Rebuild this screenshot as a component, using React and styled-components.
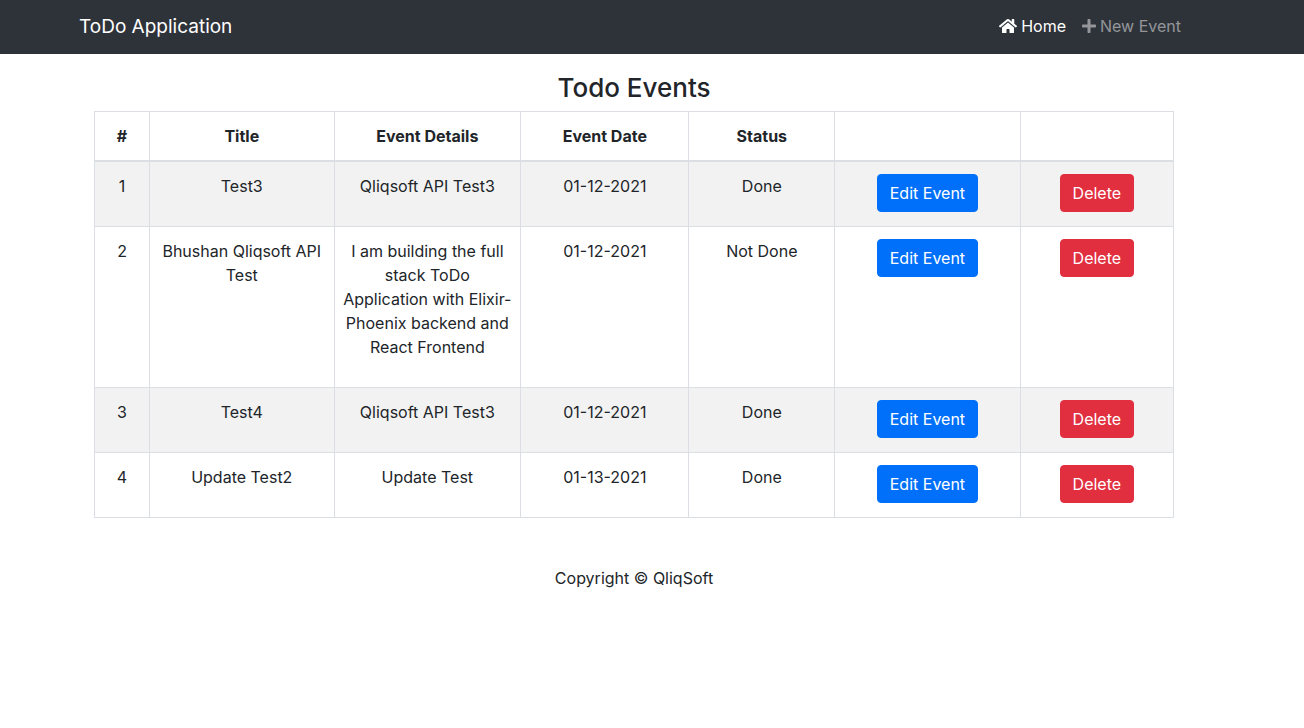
import React from "react";
import styled, { createGlobalStyle } from "styled-components";
import { FaHome, FaPlus } from "react-icons/fa";

const GlobalStyle = createGlobalStyle`
  *, *::before, *::after { box-sizing: border-box; }
  body {
    margin: 0;
    background: #fff;
    color: #212529;
    font-family: Inter, "Liberation Sans", sans-serif;
    font-size: 16px;
    line-height: 24px;
  }
`;

const Navbar = styled.header`
  background: #2e333a;
  padding: 6px 36px 8px 0;
`;

const NavInner = styled.div`
  display: flex;
  align-items: center;
  justify-content: space-between;
  max-width: 1140px;
  min-height: 40px;
  margin: 0 auto;
  padding: 0 23px 0 15px;
`;

const Brand = styled.a`
  padding-top: 2px;
  color: #fff;
  font-size: 19px;
  line-height: 30px;
  text-decoration: none;
`;

const Nav = styled.nav`
  display: flex;
  gap: 16px;
`;

const NavLink = styled.a`
  display: flex;
  align-items: center;
  gap: 4px;
  color: ${(p) => (p.$active ? "#fff" : "#949699")};
  text-decoration: none;

  svg {
    width: ${(p) => (p.$active ? "18px" : "14px")};
    height: 16px;
  }
`;

const Page = styled.div`
  padding-right: 36px;
`;

const Main = styled.main`
  max-width: 1110px;
  margin: 0 auto;
  padding: 18px 15px 16px;
`;

const Heading = styled.h1`
  margin: 0 0 7px;
  font-size: 26px;
  font-weight: 500;
  line-height: 32px;
  text-align: center;
`;

const Table = styled.table`
  width: 100%;
  table-layout: fixed;
  border-collapse: collapse;
  text-align: center;
`;

const HeadCell = styled.th`
  width: ${(p) => p.$width};
  padding: 12px 8px;
  border: 1px solid #dbdfe3;
  border-bottom-width: 2px;
  font-weight: 700;
`;

const Row = styled.tr`
  &:nth-of-type(odd) { background: #f2f2f2; }
`;

const Cell = styled.td`
  padding: 12px 8px;
  border: 1px solid #dbdfe3;
  vertical-align: top;
`;

const Details = styled.p`
  margin: 0 0 16px;
`;

const Button = styled.button`
  padding: 6px 12px;
  border: 1px solid ${(p) => (p.$danger ? "#e12f40" : "#0070fa")};
  border-radius: 4px;
  background: ${(p) => (p.$danger ? "#e12f40" : "#0070fa")};
  color: #fff;
  font: inherit;
  cursor: pointer;
`;

const Footer = styled.footer`
  padding: 32px 16px;
  text-align: center;
`;

const columns = [
  ["#", "5.1%"],
  ["Title", "17.1%"],
  ["Event Details", "17.3%"],
  ["Event Date", "15.6%"],
  ["Status", "13.5%"],
  ["", "17.2%"],
  ["", "14.2%"],
];

const events = [
  { title: "Test3", details: "Qliqsoft API Test3", date: "01-12-2021", status: "Done" },
  {
    title: "Bhushan Qliqsoft API Test",
    details: "I am building the full stack ToDo Application with Elixir-Phoenix backend and React Frontend",
    date: "01-12-2021",
    status: "Not Done",
  },
  { title: "Test4", details: "Qliqsoft API Test3", date: "01-12-2021", status: "Done" },
  { title: "Update Test2", details: "Update Test", date: "01-13-2021", status: "Done" },
];

export default function App() {
  return (
    <>
      <GlobalStyle />
      <Navbar>
        <NavInner>
          <Brand href="#">ToDo Application</Brand>
          <Nav>
            <NavLink href="#" $active><FaHome />Home</NavLink>
            <NavLink href="#new"><FaPlus />New Event</NavLink>
          </Nav>
        </NavInner>
      </Navbar>
      <Page>
        <Main>
          <Heading>Todo Events</Heading>
          <Table>
            <thead>
              <tr>
                {columns.map(([label, width], i) => (
                  <HeadCell key={i} $width={width} scope="col">{label}</HeadCell>
                ))}
              </tr>
            </thead>
            <tbody>
              {events.map((e, i) => (
                <Row key={i}>
                  <Cell>{i + 1}</Cell>
                  <Cell>{e.title}</Cell>
                  <Cell><Details>{e.details}</Details></Cell>
                  <Cell>{e.date}</Cell>
                  <Cell>{e.status}</Cell>
                  <Cell><Button type="button">Edit Event</Button></Cell>
                  <Cell><Button type="button" $danger>Delete</Button></Cell>
                </Row>
              ))}
            </tbody>
          </Table>
        </Main>
        <Footer>Copyright © QliqSoft</Footer>
      </Page>
    </>
  );
}
